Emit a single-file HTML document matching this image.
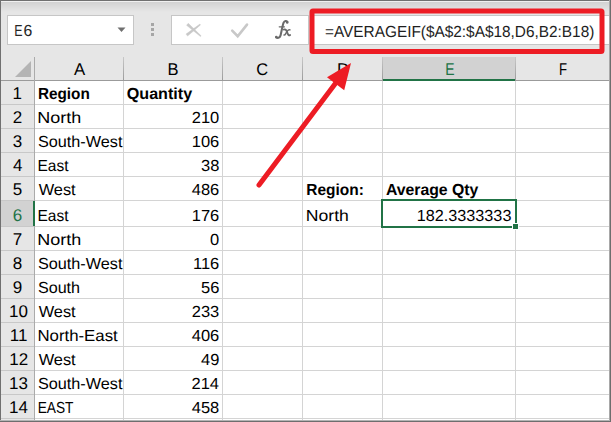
<!DOCTYPE html>
<html><head><meta charset="utf-8">
<style>
html,body{margin:0;padding:0;}
body{width:611px;height:422px;overflow:hidden;position:relative;background:#fff;font-family:"Liberation Sans",sans-serif;}
.a{position:absolute;}
svg{position:absolute;left:0;top:0;}
text{text-rendering:geometricPrecision;}
</style></head><body>
<div class="a" style="left:0;top:0;width:611px;height:81px;background:#e6e6e6;"></div>
<div class="a" style="left:0;top:2px;width:611px;height:10px;background:linear-gradient(#d2d2d2,#e6e6e6);"></div>
<div class="a" style="left:7px;top:15px;width:125px;height:28px;background:#fff;border:1px solid #c6c6c6;"></div>
<svg class="a" style="left:117px;top:27px" width="10" height="6"><path d="M0.5 0.5 L8.5 0.5 L4.5 5 Z" fill="#6f6f6f"/></svg>
<div class="a" style="left:151px;top:23px;width:3px;height:3px;background:#a6a6a6;"></div>
<div class="a" style="left:151px;top:28px;width:3px;height:3px;background:#a6a6a6;"></div>
<div class="a" style="left:151px;top:33px;width:3px;height:3px;background:#a6a6a6;"></div>
<div class="a" style="left:171px;top:15px;width:136px;height:28px;background:#fff;border:1px solid #c6c6c6;"></div>
<svg width="611" height="60"><path d="M188.3 23.3 L201.1 35.8 L200.5 36.6 L186.5 25.3 Z" fill="#c8c8c8" stroke="#c8c8c8" stroke-width="0.4" stroke-linejoin="round"/><path d="M199.9 24.1 L200.5 24.9 L187.6 36.1 L186.0 34.1 Z" fill="#c8c8c8" stroke="#c8c8c8" stroke-width="0.4" stroke-linejoin="round"/><path d="M232.2 30.6 L237.7 36.2 L247 24.6" fill="none" stroke="#c8c8c8" stroke-width="2.6" stroke-linecap="round"/><g fill="none" stroke="#6a6a6a" stroke-linecap="round"><path d="M287.3 21.9 C286.5 20.6 284.6 20.6 283.6 22.6 C282.6 25 281.6 31 280.6 35.2 C280 37.6 278 38.6 276.3 37.3" stroke-width="2.1"/><path d="M279.2 26.8 L284.4 26.8" stroke-width="1.2"/><path d="M283.9 29.6 C285 29.1 286 29.6 286.6 31 L287.9 34.2 C288.4 35.4 289.3 35.6 290.1 35" stroke-width="1.9"/><path d="M290 29.8 C289 29.3 288.1 29.9 287.1 31.3 L285.7 33.6 C285.1 34.8 284.6 35.2 284 35" stroke-width="1.5"/></g><circle cx="287.2" cy="22.4" r="1.3" fill="#6a6a6a"/><circle cx="276.3" cy="37.1" r="1.3" fill="#6a6a6a"/></svg>
<div class="a" style="left:311px;top:15px;width:310px;height:28px;background:#fff;border:1px solid #c6c6c6;"></div>
<div class="a" style="left:383px;top:57px;width:132px;height:23px;background:#d2d2d2;"></div>
<div class="a" style="left:0;top:80px;width:611px;height:1px;background:#9b9b9b;"></div>
<div class="a" style="left:383px;top:79px;width:132px;height:2px;background:#217346;"></div>
<div class="a" style="left:123px;top:57px;width:1px;height:23px;background:linear-gradient(#c8c8c8,#9c9c9c);"></div>
<div class="a" style="left:222px;top:57px;width:1px;height:23px;background:linear-gradient(#c8c8c8,#9c9c9c);"></div>
<div class="a" style="left:302px;top:57px;width:1px;height:23px;background:linear-gradient(#c8c8c8,#9c9c9c);"></div>
<div class="a" style="left:382px;top:57px;width:1px;height:23px;background:linear-gradient(#c8c8c8,#9c9c9c);"></div>
<div class="a" style="left:515px;top:57px;width:1px;height:23px;background:linear-gradient(#c8c8c8,#9c9c9c);"></div>
<svg class="a" style="left:15px;top:61px" width="17" height="17"><path d="M16 0 L16 16 L0 16 Z" fill="#b4b4b4"/></svg>
<div class="a" style="left:0;top:81px;width:34px;height:341px;background:#e6e6e6;"></div>
<div class="a" style="left:1px;top:201px;width:33px;height:25px;background:#d2d2d2;"></div>
<div class="a" style="left:0;top:104px;width:34px;height:1px;background:#c8c8c8;"></div>
<div class="a" style="left:35px;top:104px;width:576px;height:1px;background:#d4d4d4;"></div>
<div class="a" style="left:0;top:128px;width:34px;height:1px;background:#c8c8c8;"></div>
<div class="a" style="left:35px;top:128px;width:576px;height:1px;background:#d4d4d4;"></div>
<div class="a" style="left:0;top:152px;width:34px;height:1px;background:#c8c8c8;"></div>
<div class="a" style="left:35px;top:152px;width:576px;height:1px;background:#d4d4d4;"></div>
<div class="a" style="left:0;top:176px;width:34px;height:1px;background:#c8c8c8;"></div>
<div class="a" style="left:35px;top:176px;width:576px;height:1px;background:#d4d4d4;"></div>
<div class="a" style="left:0;top:200px;width:34px;height:1px;background:#c8c8c8;"></div>
<div class="a" style="left:35px;top:200px;width:576px;height:1px;background:#d4d4d4;"></div>
<div class="a" style="left:0;top:226px;width:34px;height:1px;background:#c8c8c8;"></div>
<div class="a" style="left:35px;top:226px;width:576px;height:1px;background:#d4d4d4;"></div>
<div class="a" style="left:0;top:250px;width:34px;height:1px;background:#c8c8c8;"></div>
<div class="a" style="left:35px;top:250px;width:576px;height:1px;background:#d4d4d4;"></div>
<div class="a" style="left:0;top:274px;width:34px;height:1px;background:#c8c8c8;"></div>
<div class="a" style="left:35px;top:274px;width:576px;height:1px;background:#d4d4d4;"></div>
<div class="a" style="left:0;top:298px;width:34px;height:1px;background:#c8c8c8;"></div>
<div class="a" style="left:35px;top:298px;width:576px;height:1px;background:#d4d4d4;"></div>
<div class="a" style="left:0;top:322px;width:34px;height:1px;background:#c8c8c8;"></div>
<div class="a" style="left:35px;top:322px;width:576px;height:1px;background:#d4d4d4;"></div>
<div class="a" style="left:0;top:346px;width:34px;height:1px;background:#c8c8c8;"></div>
<div class="a" style="left:35px;top:346px;width:576px;height:1px;background:#d4d4d4;"></div>
<div class="a" style="left:0;top:370px;width:34px;height:1px;background:#c8c8c8;"></div>
<div class="a" style="left:35px;top:370px;width:576px;height:1px;background:#d4d4d4;"></div>
<div class="a" style="left:0;top:394px;width:34px;height:1px;background:#c8c8c8;"></div>
<div class="a" style="left:35px;top:394px;width:576px;height:1px;background:#d4d4d4;"></div>
<div class="a" style="left:0;top:418px;width:34px;height:1px;background:#c8c8c8;"></div>
<div class="a" style="left:35px;top:418px;width:576px;height:1px;background:#d4d4d4;"></div>
<div class="a" style="left:123px;top:81px;width:1px;height:341px;background:#d4d4d4;"></div>
<div class="a" style="left:222px;top:81px;width:1px;height:341px;background:#d4d4d4;"></div>
<div class="a" style="left:302px;top:81px;width:1px;height:341px;background:#d4d4d4;"></div>
<div class="a" style="left:382px;top:81px;width:1px;height:341px;background:#d4d4d4;"></div>
<div class="a" style="left:515px;top:81px;width:1px;height:341px;background:#d4d4d4;"></div>
<div class="a" style="left:34px;top:57px;width:1px;height:365px;background:#ababab;"></div>
<div class="a" style="left:33px;top:201px;width:2px;height:25px;background:#217346;"></div>
<svg width="611" height="422"><text transform="matrix(0.9569 0 0 1 37.94 99)" font-family="Liberation Sans" font-weight="700" font-style="normal" font-size="16" fill="#000">Region</text><text transform="matrix(1.0078 0 0 1 126.74 99)" font-family="Liberation Sans" font-weight="700" font-style="normal" font-size="16" fill="#000">Quantity</text><text transform="matrix(1.1243 0 0 1 37.29 123)" font-family="Liberation Sans" font-weight="400" font-style="normal" font-size="16" fill="#000">North</text><text transform="matrix(1.0300 0 0 1 191.72 123)" font-family="Liberation Sans" font-weight="400" font-style="normal" font-size="16" fill="#000">210</text><text transform="matrix(1.0145 0 0 1 37.94 147)" font-family="Liberation Sans" font-weight="400" font-style="normal" font-size="16" fill="#000">South-West</text><text transform="matrix(1.0300 0 0 1 191.72 147)" font-family="Liberation Sans" font-weight="400" font-style="normal" font-size="16" fill="#000">106</text><text transform="matrix(0.9691 0 0 1 37.49 171)" font-family="Liberation Sans" font-weight="400" font-style="normal" font-size="16" fill="#000">East</text><text transform="matrix(1.0300 0 0 1 200.99 171)" font-family="Liberation Sans" font-weight="400" font-style="normal" font-size="16" fill="#000">38</text><text transform="matrix(1.0222 0 0 1 38.70 195)" font-family="Liberation Sans" font-weight="400" font-style="normal" font-size="16" fill="#000">West</text><text transform="matrix(1.0300 0 0 1 191.72 195)" font-family="Liberation Sans" font-weight="400" font-style="normal" font-size="16" fill="#000">486</text><text transform="matrix(0.9691 0 0 1 37.49 221)" font-family="Liberation Sans" font-weight="400" font-style="normal" font-size="16" fill="#000">East</text><text transform="matrix(1.0300 0 0 1 191.72 221)" font-family="Liberation Sans" font-weight="400" font-style="normal" font-size="16" fill="#000">176</text><text transform="matrix(1.1243 0 0 1 37.29 245)" font-family="Liberation Sans" font-weight="400" font-style="normal" font-size="16" fill="#000">North</text><text transform="matrix(1.0300 0 0 1 210.00 245)" font-family="Liberation Sans" font-weight="400" font-style="normal" font-size="16" fill="#000">0</text><text transform="matrix(1.0145 0 0 1 37.94 269)" font-family="Liberation Sans" font-weight="400" font-style="normal" font-size="16" fill="#000">South-West</text><text transform="matrix(1.0300 0 0 1 193.01 269)" font-family="Liberation Sans" font-weight="400" font-style="normal" font-size="16" fill="#000">116</text><text transform="matrix(1.0075 0 0 1 37.94 293)" font-family="Liberation Sans" font-weight="400" font-style="normal" font-size="16" fill="#000">South</text><text transform="matrix(1.0300 0 0 1 200.99 293)" font-family="Liberation Sans" font-weight="400" font-style="normal" font-size="16" fill="#000">56</text><text transform="matrix(1.0222 0 0 1 38.70 317)" font-family="Liberation Sans" font-weight="400" font-style="normal" font-size="16" fill="#000">West</text><text transform="matrix(1.0300 0 0 1 191.72 317)" font-family="Liberation Sans" font-weight="400" font-style="normal" font-size="16" fill="#000">233</text><text transform="matrix(1.0507 0 0 1 37.39 341)" font-family="Liberation Sans" font-weight="400" font-style="normal" font-size="16" fill="#000">North-East</text><text transform="matrix(1.0300 0 0 1 191.72 341)" font-family="Liberation Sans" font-weight="400" font-style="normal" font-size="16" fill="#000">406</text><text transform="matrix(1.0222 0 0 1 38.70 365)" font-family="Liberation Sans" font-weight="400" font-style="normal" font-size="16" fill="#000">West</text><text transform="matrix(1.0300 0 0 1 200.99 365)" font-family="Liberation Sans" font-weight="400" font-style="normal" font-size="16" fill="#000">49</text><text transform="matrix(1.0145 0 0 1 37.94 389)" font-family="Liberation Sans" font-weight="400" font-style="normal" font-size="16" fill="#000">South-West</text><text transform="matrix(1.0300 0 0 1 191.46 389)" font-family="Liberation Sans" font-weight="400" font-style="normal" font-size="16" fill="#000">214</text><text transform="matrix(0.8571 0 0 1 37.63 413)" font-family="Liberation Sans" font-weight="400" font-style="normal" font-size="16" fill="#000">EAST</text><text transform="matrix(1.0300 0 0 1 191.72 413)" font-family="Liberation Sans" font-weight="400" font-style="normal" font-size="16" fill="#000">458</text><text transform="matrix(0.9667 0 0 1 306.23 195)" font-family="Liberation Sans" font-weight="700" font-style="normal" font-size="16" fill="#000">Region:</text><text transform="matrix(0.9871 0 0 1 385.91 195)" font-family="Liberation Sans" font-weight="700" font-style="normal" font-size="16" fill="#000">Average Qty</text><text transform="matrix(1.1000 0 0 1 305.82 221)" font-family="Liberation Sans" font-weight="400" font-style="normal" font-size="16" fill="#000">North</text><text transform="matrix(1.0120 0 0 1 416.83 221)" font-family="Liberation Sans" font-weight="400" font-style="normal" font-size="16" fill="#000">182.3333333</text><text transform="matrix(0.9609 0 0 1 324.98 37)" font-family="Liberation Sans" font-weight="400" font-style="normal" font-size="16" fill="#1e1e1e">=AVERAGEIF($A$2:$A$18,D6,B2:B18)</text><text transform="matrix(0.7771 0 0 1 14.23 36)" font-family="Liberation Sans" font-weight="400" font-style="normal" font-size="16" fill="#262626">E</text><text transform="matrix(0.9867 0 0 1 23.46 36)" font-family="Liberation Sans" font-weight="400" font-style="normal" font-size="16" fill="#262626">6</text><text transform="matrix(0.9867 0 0 1 74.10 75)" font-family="Liberation Sans" font-weight="400" font-style="normal" font-size="17" fill="#000">A</text><text transform="matrix(0.9730 0 0 1 167.48 75)" font-family="Liberation Sans" font-weight="400" font-style="normal" font-size="17" fill="#000">B</text><text transform="matrix(0.9674 0 0 1 256.27 75)" font-family="Liberation Sans" font-weight="400" font-style="normal" font-size="17" fill="#000">C</text><text transform="matrix(0.8211 0 0 1 445.17 75)" font-family="Liberation Sans" font-weight="400" font-style="normal" font-size="17" fill="#217346">E</text><text transform="matrix(0.7765 0 0 1 559.03 75)" font-family="Liberation Sans" font-weight="400" font-style="normal" font-size="17" fill="#000">F</text><text transform="matrix(1.0000 0 0 1 336.93 75)" font-family="Liberation Sans" font-weight="400" font-style="normal" font-size="17" fill="#000">D</text><text transform="matrix(1.0000 0 0 1 12.50 99)" font-family="Liberation Sans" font-weight="400" font-style="normal" font-size="17" fill="#000">1</text><text transform="matrix(1.0000 0 0 1 12.75 123)" font-family="Liberation Sans" font-weight="400" font-style="normal" font-size="17" fill="#000">2</text><text transform="matrix(1.0000 0 0 1 12.75 147)" font-family="Liberation Sans" font-weight="400" font-style="normal" font-size="17" fill="#000">3</text><text transform="matrix(1.0000 0 0 1 12.88 171)" font-family="Liberation Sans" font-weight="400" font-style="normal" font-size="17" fill="#000">4</text><text transform="matrix(1.0000 0 0 1 12.75 195)" font-family="Liberation Sans" font-weight="400" font-style="normal" font-size="17" fill="#000">5</text><text transform="matrix(1.0000 0 0 1 12.75 221)" font-family="Liberation Sans" font-weight="400" font-style="normal" font-size="17" fill="#217346">6</text><text transform="matrix(1.0000 0 0 1 12.75 245)" font-family="Liberation Sans" font-weight="400" font-style="normal" font-size="17" fill="#000">7</text><text transform="matrix(1.0000 0 0 1 12.75 269)" font-family="Liberation Sans" font-weight="400" font-style="normal" font-size="17" fill="#000">8</text><text transform="matrix(1.0000 0 0 1 12.75 293)" font-family="Liberation Sans" font-weight="400" font-style="normal" font-size="17" fill="#000">9</text><text transform="matrix(1.0000 0 0 1 9.05 317)" font-family="Liberation Sans" font-weight="400" font-style="normal" font-size="17" fill="#000">10</text><text transform="matrix(1.0000 0 0 1 9.80 341)" font-family="Liberation Sans" font-weight="400" font-style="normal" font-size="17" fill="#000">11</text><text transform="matrix(1.0000 0 0 1 9.18 365)" font-family="Liberation Sans" font-weight="400" font-style="normal" font-size="17" fill="#000">12</text><text transform="matrix(1.0000 0 0 1 9.05 389)" font-family="Liberation Sans" font-weight="400" font-style="normal" font-size="17" fill="#000">13</text><text transform="matrix(1.0000 0 0 1 8.93 413)" font-family="Liberation Sans" font-weight="400" font-style="normal" font-size="17" fill="#000">14</text></svg>
<div class="a" style="left:381px;top:199px;width:132px;height:25px;border:2px solid #217346;"></div>
<div class="a" style="left:512px;top:223px;width:7px;height:7px;background:#fff;"></div>
<div class="a" style="left:513px;top:224px;width:5px;height:5px;background:#217346;"></div>
<svg width="611" height="422"><rect x="312" y="11" width="290" height="40.5" rx="1" ry="1" fill="none" stroke="#ed1c24" stroke-width="5"/><line x1="259" y1="185" x2="338" y2="80" stroke="#ed1c24" stroke-width="5" stroke-linecap="round"/><path d="M351 63 L327 77.3 L344.2 90.2 Z" fill="#ed1c24"/></svg>
<div class="a" style="left:0;top:0;width:611px;height:1px;background:#707070;"></div>
<div class="a" style="left:1px;top:1px;width:608px;height:1px;background:#f0f0f0;"></div>
<div class="a" style="left:0;top:0;width:1px;height:422px;background:#707070;"></div>
<div class="a" style="left:609px;top:0;width:1px;height:422px;background:#a8a8a8;"></div>
<div class="a" style="left:610px;top:0;width:1px;height:422px;background:#6e6e6e;"></div>
<div class="a" style="left:0;top:420px;width:610px;height:1px;background:#b4b4b4;"></div>
<div class="a" style="left:0;top:421px;width:611px;height:1px;background:#6e6e6e;"></div>
</body></html>
